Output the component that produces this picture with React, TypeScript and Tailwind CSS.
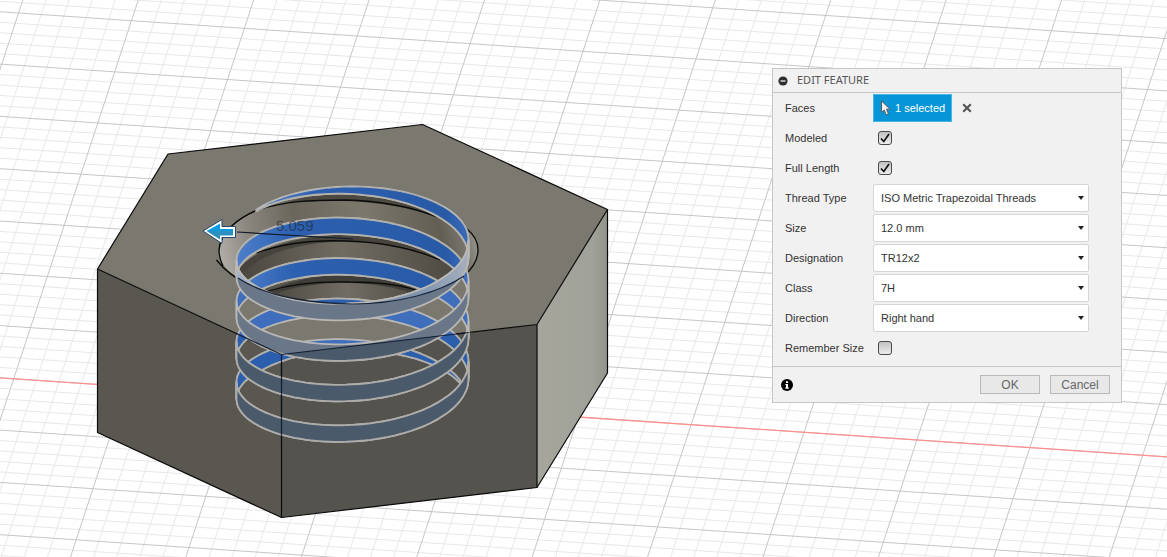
import type { ReactElement, ReactNode } from 'react';

type Point = readonly [number, number];

const toPoints = (points: readonly Point[]): string =>
  points.map(([x, y]) => `${x.toFixed(1)},${y.toFixed(1)}`).join(' ');

// Ground grid, spanned by two skewed axes
const ORIGIN: Point = [804, 432.3];
const AXIS_U: Point = [112.9, 7.65];
const AXIS_V: Point = [-16.82, 51.15];

function gridPoint(u: number, v: number): Point {
  return [
    ORIGIN[0] + AXIS_U[0] * u + AXIS_V[0] * v,
    ORIGIN[1] + AXIS_U[1] * u + AXIS_V[1] * v,
  ];
}

function GroundGrid(): ReactElement {
  const steps = Array.from({ length: 121 }, (_, i) => i - 70);
  const ordered = [...steps.filter((s) => s % 5 !== 0), ...steps.filter((s) => s % 5 === 0)];

  return (
    <g strokeWidth="1">
      {ordered.map((step) => {
        const stroke = step % 5 === 0 ? '#c6c6c6' : '#e8e8e8';
        return (
          <g key={step} stroke={stroke}>
            <polyline points={toPoints([gridPoint(step / 5, -14), gridPoint(step / 5, 10)])} />
            <polyline points={toPoints([gridPoint(-14, step / 5), gridPoint(10, step / 5)])} />
          </g>
        );
      })}
      <polyline
        points={toPoints([gridPoint(-14, 0), gridPoint(10, 0)])}
        stroke="#ff8f8f"
        strokeWidth="1.3"
      />
    </g>
  );
}

// Thread ribbon on the bore, cut off by the two flat faces of the nut
const CENTER_X = 352.5;
const RADIUS_X = 116;
const RADIUS_Y = 52.8;
const TOP_Y = 239.3;
const FLOOR_Y = 403;
const PITCH = 40.5;
const RIBBON = 16.5;
const START = 214;
const END = 1778;

function ribbonPoint(angle: number, edge: 'top' | 'bottom'): Point {
  const rad = (angle * Math.PI) / 180;
  const lower = 246.9 + (PITCH * (angle - 270)) / 360;
  const center = edge === 'top' ? Math.max(lower - RIBBON, TOP_Y) : Math.min(lower, FLOOR_Y);
  return [CENTER_X + RADIUS_X * Math.cos(rad), center + RADIUS_Y * Math.sin(rad)];
}

interface RibbonPart {
  readonly front: boolean;
  readonly top: readonly Point[];
  readonly bottom: readonly Point[];
}

function buildRibbon(): RibbonPart[] {
  const parts: RibbonPart[] = [];
  let from = START;
  while (from < END) {
    const to = Math.min((Math.floor(from / 180) + 1) * 180, END);
    const angles: number[] = [];
    for (let a = from; a < to; a += 3) angles.push(a);
    angles.push(to);
    parts.push({
      front: Math.floor(from / 180) % 2 === 0,
      top: angles.map((a) => ribbonPoint(a, 'top')),
      bottom: angles.map((a) => ribbonPoint(a, 'bottom')),
    });
    from = to;
  }
  return parts;
}

const ribbon = buildRibbon();
const backParts = ribbon.filter((part) => !part.front);
const frontParts = ribbon.filter((part) => part.front);

function RibbonParts({
  parts,
  fill,
  stroke,
}: {
  readonly parts: readonly RibbonPart[];
  readonly fill: string;
  readonly stroke: string;
}): ReactElement {
  return (
    <g strokeLinejoin="round">
      {parts.map((part, index) => (
        <polygon
          key={index}
          points={toPoints([...part.top, ...[...part.bottom].reverse()])}
          fill={fill}
          stroke={stroke}
          strokeWidth="1.8"
        />
      ))}
    </g>
  );
}

const HOLE =
  'M257 210 C283 200 320 186 352 186 C405 186 450 203 467 229 C474 234 479 242 478 253 C476 264 466 275 456 281 C430 296 395 304 352 304 C300 303 262 294 238 278 C226 270 218 262 219 248 C221 232 238 218 257 210 Z';
const LEFT_FACE = '97.5,269 281.5,354.5 281.5,517.5 97.5,432.5';
const FRONT_FACE = '281.5,354.5 537,324.5 537,487.5 281.5,517.5';
const RIGHT_FACE = '537,324.5 607.5,209.5 607.5,373 537,487.5';
const TOP_FACE = '168,154 422.5,124.5 607.5,209.5 537,324.5 281.5,354.5 97.5,269';

function Bore(): ReactElement {
  return (
    <g clipPath="url(#hole)">
      <path d={HOLE} fill="url(#wall)" />
      <path d="M285 203 C320 190 400 186 452 224 L437 217 C400 203 340 197 285 203 Z" fill="#4c4941" />
      <path d="M238 270 C270 224 435 221 466 270 L466 310 L238 310 Z" fill="#47443d" />
      <path d="M238 280 C270 228 430 229 464 279 L450 310 L238 310 Z" fill="url(#wallMid)" />
      <path d="M246 310 C285 264 395 264 440 306 L440 312 Z" fill="#403e38" />
      <path d="M262 300 C300 278 390 276 432 303 L400 312 L280 312 Z" fill="url(#wallLow)" />
      <g stroke="#0b0b0a" strokeWidth="1.3">
        <path d="M219 250 C220 232 238 218 257 210 C286 201 310 200 345 200 C385 201 412 207 437 217" />
        <path d="M256 253 C290 241 320 240 345 241 C385 242 415 249 440 260" />
        <path d="M268 291 C295 283 322 281 350 282 C380 282 400 285 416 290" />
      </g>
    </g>
  );
}

function Nut(): ReactElement {
  return (
    <g strokeLinejoin="round">
      <polygon points={TOP_FACE} fill="#7b786f" />
      <polygon points={LEFT_FACE} fill="#5a5750" />
      <polygon points={FRONT_FACE} fill="#55534d" />
      <polygon points={RIGHT_FACE} fill="url(#rightFace)" />
      <g stroke="#0a0a0a" strokeWidth="1.2">
        <polygon points={TOP_FACE} />
        <polyline points="97.5,269 97.5,432.5 281.5,517.5 537,487.5 607.5,373 607.5,209.5" />
        <path d="M281.5 354.5V517.5M537 324.5V487.5" />
      </g>

      <Bore />
      <path
        d="M257 210 C238 218 220 232 219 250 C219 256 221 262 223 266 M216.500 260 C232 280 264 296 300 301 C380 309 440 292 464 276 C480 262 484 243 467 229"
        stroke="#0b0b0a"
        strokeWidth="1.3"
      />

      <RibbonParts parts={backParts} fill="#3f6fbc" stroke="#b9b8b5" />
      <g clipPath="url(#sides)">
        <RibbonParts parts={backParts} fill="#2b5fae" stroke="#aeadaa" />
      </g>
      <g clipPath="url(#hole)">
        <RibbonParts parts={backParts} fill="url(#ribbonBack)" stroke="#b3b1ad" />
      </g>
      <RibbonParts parts={frontParts} fill="#6a7789" stroke="#b9b8b5" />
      <g clipPath="url(#sides)">
        <RibbonParts parts={frontParts} fill="#4b5a6b" stroke="#aeadaa" />
      </g>
      <g clipPath="url(#hole)">
        <RibbonParts parts={frontParts} fill="url(#ribbonLip)" stroke="#b9b8b5" />
      </g>

      {/* Edges that stay visible through the ribbon */}
      <g stroke="#061226" strokeOpacity="0.85" strokeWidth="1.2">
        <path d="M236 333.400L281.500 354.500L469 332.500M281.500 354.500V442" />
        <path d="M238 278 C262 294 300 303 352 304 C400 304 440 292 464 276" />
      </g>
    </g>
  );
}

function Manipulator(): ReactElement {
  return (
    <g>
      <path d="M237 232L353 239" stroke="#101a2c" strokeWidth="1.2" />
      <text
        x="276"
        y="231"
        fill="#20242c"
        fillOpacity="0.6"
        className="font-['Liberation_Sans',sans-serif] text-[15px]"
      >
        5.059
      </text>
      <path
        d="M203 231L222 219.500V226.500H235.500V237.500H222V243.500Z"
        fill="#fff"
        stroke="#24466b"
        strokeWidth="1"
        strokeLinejoin="round"
      />
      <path d="M206.500 231L220 223.500V229H233V235.500H220V239.500Z" fill="url(#arrow)" />
    </g>
  );
}

function Viewport(): ReactElement {
  return (
    <svg
      viewBox="0 0 1167 557"
      preserveAspectRatio="xMidYMid slice"
      fill="none"
      className="block h-screen w-full"
      role="img"
      aria-label="Hexagonal nut with thread preview"
    >
      <defs>
        <clipPath id="hole">
          <path d={HOLE} />
        </clipPath>
        <clipPath id="sides">
          <polygon points={LEFT_FACE} />
          <polygon points={FRONT_FACE} />
        </clipPath>
        <linearGradient id="rightFace" x1="0" y1="0" x2="1" y2="0">
          <stop offset="0" stopColor="#a6a69d" />
          <stop offset="0.8" stopColor="#a0a198" />
          <stop offset="1" stopColor="#92938a" />
        </linearGradient>
        <linearGradient id="wall" gradientUnits="userSpaceOnUse" x1="219" y1="272" x2="478" y2="220">
          <stop offset="0" stopColor="#b5b2ac" />
          <stop offset="0.14" stopColor="#8b877f" />
          <stop offset="0.32" stopColor="#6a665c" />
          <stop offset="0.58" stopColor="#7d786c" />
          <stop offset="0.85" stopColor="#625e54" />
          <stop offset="0.93" stopColor="#77746b" />
          <stop offset="1" stopColor="#a19e96" />
        </linearGradient>
        <linearGradient id="wallMid" gradientUnits="userSpaceOnUse" x1="240" y1="0" x2="465" y2="0">
          <stop offset="0" stopColor="#4a4740" />
          <stop offset="0.45" stopColor="#716c62" />
          <stop offset="1" stopColor="#4a4740" />
        </linearGradient>
        <linearGradient id="wallLow" gradientUnits="userSpaceOnUse" x1="262" y1="0" x2="432" y2="0">
          <stop offset="0" stopColor="#47443d" />
          <stop offset="0.5" stopColor="#716d64" />
          <stop offset="1" stopColor="#4a4740" />
        </linearGradient>
        <linearGradient id="ribbonBack" gradientUnits="userSpaceOnUse" x1="236" y1="0" x2="469" y2="0">
          <stop offset="0" stopColor="#4d7fcb" />
          <stop offset="0.25" stopColor="#2c60b0" />
          <stop offset="0.9" stopColor="#285aa6" />
          <stop offset="1" stopColor="#3a6cba" />
        </linearGradient>
        <linearGradient id="ribbonLip" gradientUnits="userSpaceOnUse" x1="236" y1="0" x2="469" y2="0">
          <stop offset="0" stopColor="#a3b2cc" />
          <stop offset="0.4" stopColor="#77879f" />
          <stop offset="0.8" stopColor="#8295b0" />
          <stop offset="1" stopColor="#a6b0be" />
        </linearGradient>
        <linearGradient id="arrow" x1="0" y1="0" x2="0" y2="1">
          <stop offset="0.5" stopColor="#0a9be0" />
          <stop offset="0.5" stopColor="#2c8fc0" />
        </linearGradient>
      </defs>
      <GroundGrid />
      <Nut />
      <Manipulator />
    </svg>
  );
}

function Field({
  id,
  label,
  children,
}: {
  readonly id: string;
  readonly label: string;
  readonly children: ReactNode;
}): ReactElement {
  return (
    <div className="flex h-[30px] items-center">
      <label htmlFor={id} className="w-[88px] shrink-0">
        {label}
      </label>
      {children}
    </div>
  );
}

function CheckField({
  id,
  label,
  checked = false,
}: {
  readonly id: string;
  readonly label: string;
  readonly checked?: boolean;
}): ReactElement {
  return (
    <Field id={id} label={label}>
      <span className="relative ml-[5px] flex size-[14px]">
        <input
          id={id}
          type="checkbox"
          defaultChecked={checked}
          className="peer size-full appearance-none rounded-[3px] border border-[#4a4a4a] bg-linear-to-b from-[#c2c2c2] to-[#ececec]"
        />
        <svg
          viewBox="0 0 14 14"
          fill="none"
          className="pointer-events-none absolute inset-0 hidden peer-checked:block"
        >
          <path d="M3 7.500L5.800 10.500L11 3" stroke="#111" strokeWidth="1.7" />
        </svg>
      </span>
    </Field>
  );
}

function SelectField({
  id,
  label,
  value,
}: {
  readonly id: string;
  readonly label: string;
  readonly value: string;
}): ReactElement {
  return (
    <Field id={id} label={label}>
      <span className="relative flex flex-1">
        <select
          id={id}
          className="h-7 w-full appearance-none rounded-[2px] border border-[#d6d6d6] bg-white px-[7px] text-[#333]"
        >
          <option>{value}</option>
        </select>
        <svg
          viewBox="0 0 6 4"
          className="pointer-events-none absolute top-3 right-[5px] h-1 w-[6px]"
        >
          <path d="M0 0H6L3 4Z" fill="#222" />
        </svg>
      </span>
    </Field>
  );
}

const selects = [
  { id: 'thread-type', label: 'Thread Type', value: 'ISO Metric Trapezoidal Threads' },
  { id: 'size', label: 'Size', value: '12.0 mm' },
  { id: 'designation', label: 'Designation', value: 'TR12x2' },
  { id: 'class', label: 'Class', value: '7H' },
  { id: 'direction', label: 'Direction', value: 'Right hand' },
];

function EditFeaturePanel(): ReactElement {
  return (
    <section className="absolute top-[68px] right-[45px] w-[350px] border border-[#c6c6c6] bg-[#f1f1f1] font-['Liberation_Sans',Arial,sans-serif] text-[11px] text-[#333]">
      <header className="flex h-6 items-center gap-[9px] border-b border-[#c6c6c6] px-[5px]">
        <button type="button" aria-label="Collapse" className="size-[10px]">
          <svg viewBox="0 0 10 10">
            <circle cx="5" cy="5" r="4.600" fill="#2e2e2e" />
            <path d="M2.500 5H7.500" stroke="#fff" strokeWidth="1.2" />
          </svg>
        </button>
        <h2 className="font-['Noto_Sans',sans-serif] text-[11px] text-[#555]">EDIT FEATURE</h2>
      </header>

      <div className="pr-8 pb-[3px] pl-3">
        <Field id="faces" label="Faces">
          <button
            id="faces"
            type="button"
            className="flex h-7 w-[79px] items-center gap-1 border border-[#48b4e8] bg-[#0696d7] pl-[6px] text-white"
          >
            <svg viewBox="0 0 11 16" className="h-4 w-[11px]">
              <path
                d="M1.500 1V12.500L4.200 10L6.200 14.800L8.400 13.800L6.400 9.200H10Z"
                fill="#f4f4f4"
                stroke="#555"
                strokeWidth="0.9"
              />
            </svg>
            <span>1 selected</span>
          </button>
          <button type="button" aria-label="Clear selection" className="ml-[10px] size-[10px]">
            <svg viewBox="0 0 10 10">
              <path d="M1.200 1.200L8.800 8.800M8.800 1.200L1.200 8.800" stroke="#555" strokeWidth="2.1" />
            </svg>
          </button>
        </Field>
        <CheckField id="modeled" label="Modeled" checked />
        <CheckField id="full-length" label="Full Length" checked />
        {selects.map((select) => (
          <SelectField key={select.id} {...select} />
        ))}
        <CheckField id="remember-size" label="Remember Size" />
      </div>

      <footer className="flex h-9 items-center justify-end gap-[10px] border-t border-[#c6c6c6] pr-[11px] pl-2 text-[12px] text-[#666]">
        <button type="button" aria-label="Information" className="mr-auto size-3">
          <svg viewBox="0 0 12 12">
            <circle cx="6" cy="6" r="6" fill="#000" />
            <path d="M5 2.200H7V4H5ZM4.300 5H7V8.500H7.800V9.700H4.300V8.500H5V6.100H4.300Z" fill="#fff" />
          </svg>
        </button>
        <button type="button" className="h-[19px] w-[60px] border border-[#b9b9b9] bg-[#e8e8e8] leading-none">
          OK
        </button>
        <button type="button" className="h-[19px] w-[60px] border border-[#b9b9b9] bg-[#e8e8e8] leading-none">
          Cancel
        </button>
      </footer>
    </section>
  );
}

export default function App(): ReactElement {
  return (
    <main className="relative overflow-hidden bg-white">
      <Viewport />
      <EditFeaturePanel />
    </main>
  );
}
